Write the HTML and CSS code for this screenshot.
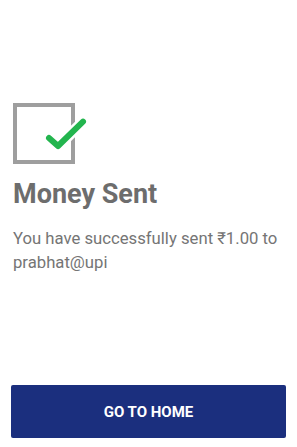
FILE: index.html
```html
<!DOCTYPE html>
<html>
<head>
<meta charset="utf-8">
<link rel="stylesheet" href="styles.css">
</head>
<body>
<div class="screen">
  <div class="content">
    <svg class="icon" width="76" height="64" viewBox="0 0 76 64">
      <rect x="2" y="2" width="58" height="57" fill="none" stroke="#9e9e9e" stroke-width="4"/>
      <polyline points="36,35 45,43 70,18.7" fill="none" stroke="#ffffff" stroke-width="11" stroke-linecap="round" stroke-linejoin="round"/>
      <polyline points="36,35 45,43 70,18.7" fill="none" stroke="#23b54e" stroke-width="6" stroke-linecap="round" stroke-linejoin="round"/>
    </svg>
    <h1 class="title">Money Sent</h1>
    <p class="message">You have successfully sent ₹1.00 to prabhat@upi</p>
  </div>
  <button class="home-btn">GO TO HOME</button>
</div>
</body>
</html>
```
FILE: styles.css
```css
html, body {
  margin: 0;
  padding: 0;
  background: #ffffff;
}
.screen {
  width: 297px;
  height: 447px;
  box-sizing: border-box;
  display: flex;
  flex-direction: column;
  font-family: Roboto, "Liberation Sans", sans-serif;
}
.content {
  flex: 1;
  padding: 103px 13px 0 13px;
  display: flex;
  flex-direction: column;
}
.icon {
  display: block;
}
.title {
  margin: 10px 0 0 0;
  font-size: 27px;
  line-height: 34px;
  font-weight: 700;
  color: #6d6d6d;
}
.message {
  margin: 16px 0 0 0;
  font-size: 16.7px;
  line-height: 24px;
  color: #757575;
}
.home-btn {
  margin: 0 11px 9px 11px;
  height: 53px;
  border: none;
  border-radius: 2px;
  background: #1b2f7e;
  color: #ffffff;
  font-family: Roboto, "Liberation Sans", sans-serif;
  font-size: 15px;
  font-weight: 700;
  letter-spacing: 0;
}
```
